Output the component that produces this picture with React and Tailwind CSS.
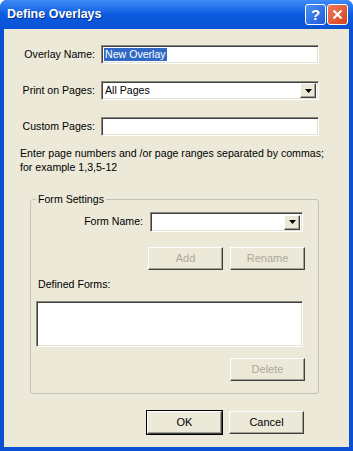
import React from "react";

//! Sunken 3D edit field
const Field = ({ className = "", children }) => (
  <div
    className={`h-[19px] bg-white border border-t-[#8a8a80] border-l-[#8a8a80] border-r-white border-b-white shadow-[inset_1px_1px_0_#3f3f3f,inset_-1px_-1px_0_#e4e1d2] flex items-center ${className}`}
  >
    {children}
  </div>
);

//! Combo box with the little arrow button
const Combo = ({ value, className = "" }) => (
  <Field className={`pl-[3px] pr-[2px] ${className}`}>
    <span className="flex-1 leading-none">{value}</span>
    <span className="w-[16px] h-[15px] bg-[#ece9d8] border border-t-white border-l-white border-r-[#404040] border-b-[#404040] shadow-[inset_-1px_-1px_0_#a0a094] flex items-center justify-center">
      <svg width="7" height="4" viewBox="0 0 7 4">
        <path d="M0 0h7L3.5 4z" fill="#000" />
      </svg>
    </span>
  </Field>
);

//! Raised push button
const Btn = ({ children, disabled, isDefault }) => (
  <button
    className={`w-[75px] h-[23px] bg-[#ece9d8] text-[11px] ${
      isDefault ? "outline outline-1 outline-black" : ""
    } border border-t-white border-l-white border-r-[#404040] border-b-[#404040] shadow-[inset_-1px_-1px_0_#a0a094] ${
      disabled ? "text-[#aca899]" : "text-black"
    }`}
  >
    {children}
  </button>
);

const Row = ({ label, children }) => (
  <div className="flex items-center h-[19px]">
    <span className="w-[92px] pr-[1px] text-right">{label}</span>
    <div className="ml-[5px]">{children}</div>
  </div>
);

export default function App() {
  return (
    <div className="w-[353px] h-[451px] flex flex-col bg-[#0a4fd4] rounded-t-[7px] overflow-hidden font-['Liberation_Sans',Arial,sans-serif] text-[10.6px] text-black">
      {/* title bar */}
      <div className="h-[29px] flex items-center pl-[7px] pr-[5px] bg-gradient-to-b from-[#3d8cf6] via-[#0b5be0] to-[#0a52d4]">
        <span className="flex-1 text-white font-bold text-[12.5px] [text-shadow:1px_1px_0_#0a2f8a]">
          Define Overlays
        </span>
        <div className="flex gap-[1px]">
          <span className="w-[21px] h-[21px] rounded-[3px] border border-white bg-gradient-to-br from-[#4f8ff5] to-[#1c5ad8] flex items-center justify-center text-white font-bold text-[15px] leading-none">
            ?
          </span>
          <span className="w-[21px] h-[21px] rounded-[3px] border border-white bg-gradient-to-br from-[#ef7a55] to-[#d4401c] flex items-center justify-center">
            <svg width="11" height="11" viewBox="0 0 11 11">
              <path d="M1.5 1.5l8 8M9.5 1.5l-8 8" stroke="#fff" strokeWidth="2.2" />
            </svg>
          </span>
        </div>
      </div>

      {/* body */}
      <div className="flex-1 mx-[4px] mb-[4px] bg-[#ece9d8] flex flex-col pt-[16px]">
        <div className="flex flex-col gap-[17px]">
          <Row label="Overlay Name:">
            <Field className="w-[218px] pl-[2px]">
              <span className="bg-[#316ac5] text-white px-[1px] leading-[13px]">New Overlay</span>
            </Field>
          </Row>
          <Row label="Print on Pages:">
            <Combo value="All Pages" className="w-[218px]" />
          </Row>
          <Row label="Custom Pages:">
            <Field className="w-[218px]" />
          </Row>
        </div>

        <p className="mt-[10px] pl-[16px] leading-[14px]">
          Enter page numbers and /or page ranges separated by commas;
          <br />
          for example 1,3,5-12
        </p>

        <fieldset className="mt-[19px] ml-[26px] w-[289px] border border-[#c4c2b4] rounded-[3px] pl-[5px] pr-[13px] pb-[12px]">
          <legend className="px-[2px] leading-[13px]">Form Settings</legend>
          <div className="mt-[6px] flex items-center justify-end pr-[2px]">
            <span className="mr-[7px]">Form Name:</span>
            <Combo value="" className="w-[153px] h-[20px]" />
          </div>
          <div className="mt-[15px] flex justify-end gap-[7px]">
            <Btn disabled>Add</Btn>
            <Btn disabled>Rename</Btn>
          </div>
          <div className="mt-[8px] pl-[2px] leading-[13px]">Defined Forms:</div>
          <Field className="mt-[10px] w-[267px] h-[46px]" />
          <div className="mt-[11px] flex justify-end">
            <Btn disabled>Delete</Btn>
          </div>
        </fieldset>

        <div className="mt-[17px] flex justify-end gap-[7px] pr-[45px]">
          <Btn isDefault>OK</Btn>
          <Btn>Cancel</Btn>
        </div>
      </div>
    </div>
  );
}
